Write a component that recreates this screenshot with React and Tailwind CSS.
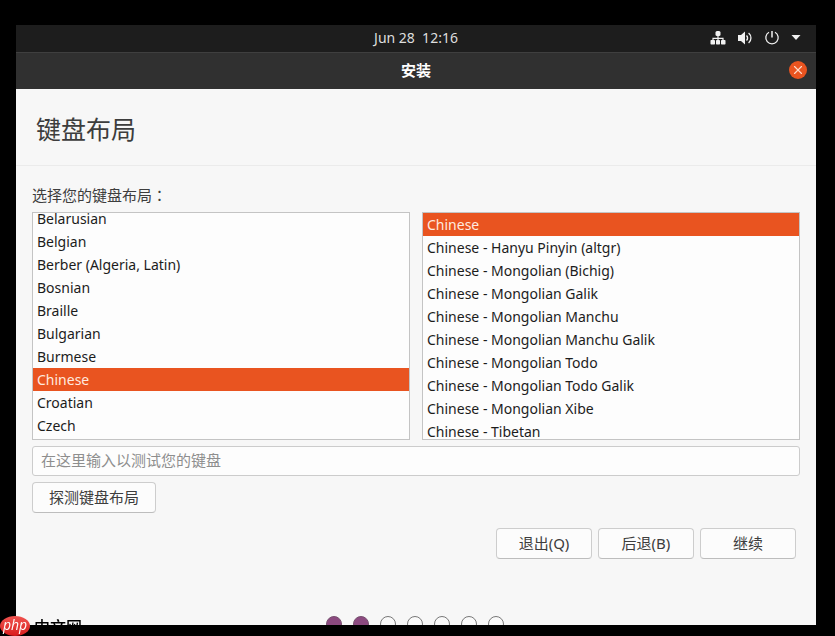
import { useState } from 'react';
import { X } from 'lucide-react';

const languages = [
  'Belarusian',
  'Belgian',
  'Berber (Algeria, Latin)',
  'Bosnian',
  'Braille',
  'Bulgarian',
  'Burmese',
  'Chinese',
  'Croatian',
  'Czech',
];

const variants = [
  'Chinese',
  'Chinese - Hanyu Pinyin (altgr)',
  'Chinese - Mongolian (Bichig)',
  'Chinese - Mongolian Galik',
  'Chinese - Mongolian Manchu',
  'Chinese - Mongolian Manchu Galik',
  'Chinese - Mongolian Todo',
  'Chinese - Mongolian Todo Galik',
  'Chinese - Mongolian Xibe',
  'Chinese - Tibetan',
];

const TOTAL_STEPS = 7;
const DONE_STEPS = 2;

const App = () => {
  const [language, setLanguage] = useState('Chinese');
  const [variant, setVariant] = useState('Chinese');

  return (
    <div className="flex min-h-screen flex-col bg-black pt-[25px] pr-[19px] pb-[11px] pl-4 font-['Noto_Sans','Noto_Sans_CJK_SC',sans-serif] text-[15px] text-[#3d3d3d]">
      <TopBar />
      <TitleBar />
      <main className="flex flex-1 flex-col bg-[#f7f7f7]">
        <h1 className="border-b border-[#ebebeb] px-5 pt-[22px] pb-[18px] text-[25px] leading-9">键盘布局</h1>

        <div className="flex flex-col px-4 pt-[18px]">
          <p className="leading-[22px]">
            选择您的键盘布局<span className="font-['Noto_Sans_CJK_TC',sans-serif]">：</span>
          </p>
          <div className="mt-1.5 grid grid-cols-2 gap-3">
            <LayoutList label="语言" items={languages} selected={language} onSelect={setLanguage} scrolled />
            <LayoutList label="布局" items={variants} selected={variant} onSelect={setVariant} />
          </div>
          <input
            type="text"
            aria-label="测试您的键盘"
            placeholder="在这里输入以测试您的键盘"
            className="mt-1.5 h-[30px] w-full rounded-[3px] border border-[#cccccc] bg-[#fdfdfd] px-2 pb-0.5 placeholder:text-[#8e8e8e]"
          />
          <DialogButton className="mt-1.5 self-start px-4">探测键盘布局</DialogButton>
          <div className="mt-[15px] flex justify-end gap-1.5 pr-1">
            <DialogButton className="w-24">退出(Q)</DialogButton>
            <DialogButton className="w-24">后退(B)</DialogButton>
            <DialogButton className="w-24">继续</DialogButton>
          </div>
        </div>

        <Steps />
      </main>
      <Watermark />
    </div>
  );
};

const TopBar = () => (
  <header className="grid h-[27px] grid-cols-3 items-center bg-[#1d1d1d] pb-0.5 text-[#dedede]">
    <time className="col-start-2 text-center text-sm whitespace-pre">Jun 28  12:16</time>
    <div className="flex items-center justify-end gap-[11px] pr-[15px] text-[#f0f0f0]">
      <NetworkIcon />
      <VolumeIcon />
      <PowerIcon />
      <svg width="10" height="5" viewBox="0 0 10 5" fill="currentColor" aria-hidden="true">
        <path d="M0.5 0h9L5 5z" />
      </svg>
    </div>
  </header>
);

const TitleBar = () => (
  <div className="grid h-[37px] grid-cols-3 items-center border-t border-[#3f3f3f] bg-[#303030] pb-0.5 text-white">
    <h2 className="col-start-2 text-center font-bold">安装</h2>
    <button
      type="button"
      aria-label="关闭"
      className="mr-[9px] flex size-[18px] items-center justify-center justify-self-end rounded-full bg-[#e95420]"
    >
      <X size={14} strokeWidth={2} color="#ffd9c8" />
    </button>
  </div>
);

const LayoutList = ({ label, items, selected, onSelect, scrolled }) => (
  <div className="h-[228px] overflow-hidden border border-[#c4c4c4] bg-[#fdfdfd]">
    <ul aria-label={label} className={scrolled ? '-mt-1.5' : ''}>
      {items.map((item) => (
        <li key={item}>
          <button
            type="button"
            aria-pressed={item === selected}
            onClick={() => onSelect(item)}
            className={`block h-[23px] w-full px-1 text-left text-sm ${
              item === selected ? 'bg-[#e95420] text-[#ffe9df]' : 'text-[#1c1c1c]'
            }`}
          >
            {item}
          </button>
        </li>
      ))}
    </ul>
  </div>
);

const DialogButton = ({ className, children }) => (
  <button
    type="button"
    className={`h-[31px] rounded-[4px] border border-[#cdcdcd] border-b-[#bdbdbd] bg-[#fcfcfc] ${className}`}
  >
    {children}
  </button>
);

// The row of dots runs off the bottom of the window
const Steps = () => (
  <div className="mt-auto flex h-[9px] justify-center gap-[11px] overflow-hidden pr-0.5">
    {Array.from({ length: TOTAL_STEPS }, (_, i) => (
      <span
        key={i}
        className={`size-4 shrink-0 rounded-full border ${
          i < DONE_STEPS ? 'border-[#77506f] bg-[#8c4a80]' : 'border-[#777777] bg-[#fafafa]'
        }`}
      />
    ))}
  </div>
);

const Watermark = () => (
  <div className="fixed bottom-0 left-0 flex h-5 items-center gap-1 text-base leading-5 font-medium text-black">
    <span className="flex h-5 w-[30px] items-center justify-center rounded-[50%] bg-linear-to-b from-[#f0524f] to-[#d9181c] pb-0.5 font-['Open_Sans',sans-serif] text-sm leading-none text-white italic">
      php
    </span>
    <span className="font-['Noto_Sans_CJK_SC',sans-serif]">中文网</span>
  </div>
);

const NetworkIcon = () => (
  <svg width="16" height="16" viewBox="0 0 16 16" fill="currentColor" aria-hidden="true">
    <rect x="5.5" y="1" width="5" height="5" rx="1.5" />
    <rect x="0.5" y="10" width="4.5" height="4.5" rx="0.7" />
    <rect x="6" y="10" width="4" height="4.5" rx="0.7" />
    <rect x="11" y="10" width="4.5" height="4.5" rx="0.7" />
    <path d="M8 5v6M3 11V8.3h10V11" fill="none" stroke="currentColor" strokeWidth="1.2" />
  </svg>
);

const VolumeIcon = () => (
  <svg width="16" height="16" viewBox="0 0 16 16" fill="currentColor" aria-hidden="true">
    <path d="M1 5h3l4-3.5v13L4 11H1z" />
    <path d="M9.5 5.5a3.5 3.5 0 0 1 0 5" fill="none" stroke="currentColor" strokeWidth="1.4" />
    <path d="M11.6 3a6.5 6.5 0 0 1 0 10" fill="none" stroke="currentColor" strokeWidth="1.3" />
  </svg>
);

const PowerIcon = () => (
  <svg width="16" height="16" viewBox="0 0 16 16" fill="none" stroke="currentColor" strokeWidth="1.3" aria-hidden="true">
    <path d="M5 2.3a6.2 6.2 0 1 0 6 0" />
    <path d="M8 1v6.5" strokeWidth="1.5" />
  </svg>
);

export default App;
